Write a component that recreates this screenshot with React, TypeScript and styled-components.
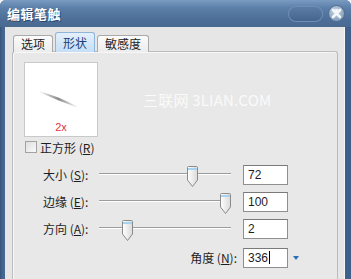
import React from "react";
import styled, { createGlobalStyle } from "styled-components";

const Global = createGlobalStyle`
  html, body { margin: 0; padding: 0; background: #f2f4f7; overflow: hidden; }
  #root { width: 351px; height: 279px; }
`;

const CJK = `"Noto Sans CJK SC", "Liberation Sans", sans-serif`;

const Window = styled.div`
  width: 351px;
  height: 279px;
  display: flex;
  flex-direction: column;
  background: linear-gradient(90deg, #35557d, #46678f 3px, #3f6089);
  border-radius: 6px 6px 0 0;
  overflow: hidden;
  font-family: ${CJK};
  color: #1e1e1e;
`;

const TitleBar = styled.div`
  height: 27px;
  flex: none;
  display: flex;
  align-items: center;
  padding: 0 6px 0 7px;
  background: linear-gradient(#7a9bc2, #5b7fa8 30%, #4d6f98 70%, #49698f);
`;

const Title = styled.div`
  flex: 1;
  color: #fff;
  font-size: 13px;
  font-weight: 700;
  letter-spacing: 0.5px;
  text-shadow: 1px 1px 0 #2d4668;
  line-height: 1;
`;

const PillButton = styled.div`
  width: 35px;
  height: 16px;
  border-radius: 8px;
  background: linear-gradient(#5d7ea7, #43638c);
  box-shadow: inset 0 0 0 1px #6f8fb6;
  margin-right: 5px;
`;

const CloseWrap = styled.div`
  width: 17px;
  height: 17px;
  display: flex;
`;

const Body = styled.div`
  flex: 1;
  margin: 0 6px 0 5px;
  background: #e6e6e6;
  padding: 6px 7px 0 7px;
  display: flex;
  flex-direction: column;
  box-shadow: inset -1px 0 0 #f6f6f6;
`;

const TabRow = styled.div`
  height: 19px;
  flex: none;
  display: flex;
  align-items: flex-end;
  gap: 2px;
  padding-left: 1px;
  margin-bottom: -1px;
  position: relative;
  z-index: 1;
`;

const Tab = styled.div<{ $active?: boolean }>`
  height: ${(p) => (p.$active ? 20 : 17)}px;
  box-sizing: border-box;
  padding: 0 7px;
  display: flex;
  align-items: center;
  font-size: 12px;
  line-height: 1;
  border: 1px solid ${(p) => (p.$active ? "#8fb4dc" : "#a9a9a9")};
  border-bottom: none;
  border-radius: 3px 3px 0 0;
  color: ${(p) => (p.$active ? "#1b3c78" : "#1e1e1e")};
  background: ${(p) =>
    p.$active
      ? "linear-gradient(#e3f0fc, #c6def5)"
      : "linear-gradient(#fbfbfb, #ececec)"};
`;

const Panel = styled.div`
  flex: 1;
  border: 1px solid #bcbcbc;
  border-bottom: none;
  border-radius: 3px 3px 0 0;
  background: #e8e8e8;
  box-shadow: inset 1px 1px 0 #f7f7f7;
  padding: 10px 0 0 11px;
  display: flex;
  flex-direction: column;
`;

const PreviewRow = styled.div`
  display: flex;
  align-items: center;
`;

const PreviewBox = styled.div`
  width: 74px;
  height: 75px;
  flex: none;
  box-sizing: border-box;
  border: 1px solid #c9c9c9;
  background: #fff;
  display: flex;
  flex-direction: column;
  align-items: center;
`;

const PreviewScale = styled.div`
  color: #e03434;
  font-family: "Liberation Sans", sans-serif;
  font-size: 11px;
  line-height: 12px;
`;

const Watermark = styled.div`
  margin-left: 45px;
  color: #fafafa;
  font-size: 15px;
  letter-spacing: 0.2px;
`;

const CheckRow = styled.div`
  display: flex;
  align-items: center;
  height: 12px;
  margin: 4px 0 0 1px;
  font-size: 12px;
`;

const CheckBox = styled.div`
  width: 12px;
  height: 12px;
  box-sizing: border-box;
  border: 1px solid #a3a3a3;
  background: linear-gradient(135deg, #dedede, #fafafa);
  margin-right: 3px;
`;

const Rows = styled.div`
  display: flex;
  flex-direction: column;
  gap: 7px;
  margin: 12px 0 0 19px;
`;

const Row = styled.div<{ $extra?: number }>`
  display: flex;
  align-items: center;
  height: 20px;
  margin-top: ${(p) => p.$extra || 0}px;
`;

const Label = styled.div<{ $wide?: boolean }>`
  flex: none;
  box-sizing: border-box;
  width: ${(p) => (p.$wide ? 200 : 56)}px;
  padding-right: ${(p) => (p.$wide ? 6 : 0)}px;
  text-align: ${(p) => (p.$wide ? "right" : "left")};
  font-size: 12px;
  line-height: 1;
  white-space: nowrap;
  u { text-decoration-thickness: 1px; text-underline-offset: 1px; }
`;

const SliderBox = styled.div`
  position: relative;
  flex: none;
  width: 132px;
  height: 20px;
  margin-right: 12px;
`;

const Track = styled.div`
  margin-top: 8px;
  height: 1px;
  background: #9c9c9c;
  border-bottom: 1px solid #fff;
`;

const ThumbWrap = styled.div`
  position: absolute;
  top: 1px;
  width: 11px;
  height: 21px;
  display: flex;
`;

const Field = styled.div`
  flex: none;
  width: 45px;
  height: 20px;
  box-sizing: border-box;
  border: 1px solid #8f8f8f;
  border-top-color: #7a7a7a;
  background: #fff;
  padding: 2px 0 0 4px;
  font-family: "Liberation Sans", sans-serif;
  font-size: 12px;
  line-height: 14px;
  display: flex;
  align-items: flex-start;
`;

const Caret = styled.span`
  width: 1px;
  height: 13px;
  background: #000;
  margin-left: 1px;
`;

const DropArrow = styled.div`
  margin-left: 5px;
  width: 0;
  height: 0;
  border-left: 3.5px solid transparent;
  border-right: 3.5px solid transparent;
  border-top: 4px solid #2b6fb9;
`;

function Thumb({ frac }: { frac: number }) {
  return (
    <ThumbWrap style={{ left: Math.round(frac * 121) }}>
      <svg width="11" height="21" viewBox="0 0 11 21">
        <defs>
          <linearGradient id="thg" x1="0" x2="1" y1="0" y2="0">
            <stop offset="0" stopColor="#ffffff" />
            <stop offset="1" stopColor="#dadada" />
          </linearGradient>
        </defs>
        <path
          d="M0.5 1.5 Q0.5 0.5 1.5 0.5 H9.5 Q10.5 0.5 10.5 1.5 V14 L5.5 20.5 L0.5 14 Z"
          fill="url(#thg)"
          stroke="#8b8b8b"
        />
        <rect x="1" y="2" width="9" height="2" fill="#a6d3f1" />
      </svg>
    </ThumbWrap>
  );
}

function Slider({ frac }: { frac: number }) {
  return (
    <SliderBox>
      <Track />
      <Thumb frac={frac} />
    </SliderBox>
  );
}

const sliders = [
  { label: "大小", key: "S", frac: 0.727, value: "72" },
  { label: "边缘", key: "E", frac: 1, value: "100" },
  { label: "方向", key: "A", frac: 0.19, value: "2" },
];

export default function App() {
  return (
    <>
      <Global />
      <Window>
        <TitleBar>
          <Title>编辑笔触</Title>
          <PillButton />
          <CloseWrap>
            <svg width="17" height="17" viewBox="0 0 17 17">
              <defs>
                <radialGradient id="cg" cx="0.45" cy="0.35" r="0.7">
                  <stop offset="0" stopColor="#c9d7e6" />
                  <stop offset="1" stopColor="#7a95b5" />
                </radialGradient>
              </defs>
              <circle cx="8.5" cy="8.5" r="8" fill="url(#cg)" stroke="#4d6c93" />
              <path
                d="M5 5 L12 12 M12 5 L5 12"
                stroke="#f4f7fa"
                strokeWidth="2.6"
                strokeLinecap="round"
              />
              <circle cx="8.5" cy="6.3" r="2.2" fill="#f4f7fa" />
            </svg>
          </CloseWrap>
        </TitleBar>
        <Body>
          <TabRow>
            <Tab>选项</Tab>
            <Tab $active>形状</Tab>
            <Tab>敏感度</Tab>
          </TabRow>
          <Panel>
            <PreviewRow>
              <PreviewBox>
                <svg width="72" height="58" viewBox="0 0 72 58">
                  <defs>
                    <linearGradient id="sg" x1="0" x2="1" y1="0" y2="0">
                      <stop offset="0" stopColor="#c8c8c8" stopOpacity="0.2" />
                      <stop offset="0.5" stopColor="#8a8a8a" />
                      <stop offset="1" stopColor="#c8c8c8" stopOpacity="0.2" />
                    </linearGradient>
                  </defs>
                  <path
                    d="M15 29 Q34 34 52 44 Q33 37 15 29 Z"
                    fill="url(#sg)"
                    stroke="url(#sg)"
                    strokeWidth="1.2"
                  />
                </svg>
                <PreviewScale>2x</PreviewScale>
              </PreviewBox>
              <Watermark>三联网 3LIAN.COM</Watermark>
            </PreviewRow>
            <CheckRow>
              <CheckBox />
              正方形 (<u>R</u>)
            </CheckRow>
            <Rows>
              {sliders.map((s) => (
                <Row key={s.key}>
                  <Label>
                    {s.label} (<u>{s.key}</u>):
                  </Label>
                  <Slider frac={s.frac} />
                  <Field>{s.value}</Field>
                </Row>
              ))}
              <Row $extra={2}>
                <Label $wide>
                  角度 (<u>N</u>):
                </Label>
                <Field>
                  336
                  <Caret />
                </Field>
                <DropArrow />
              </Row>
            </Rows>
          </Panel>
        </Body>
      </Window>
    </>
  );
}
